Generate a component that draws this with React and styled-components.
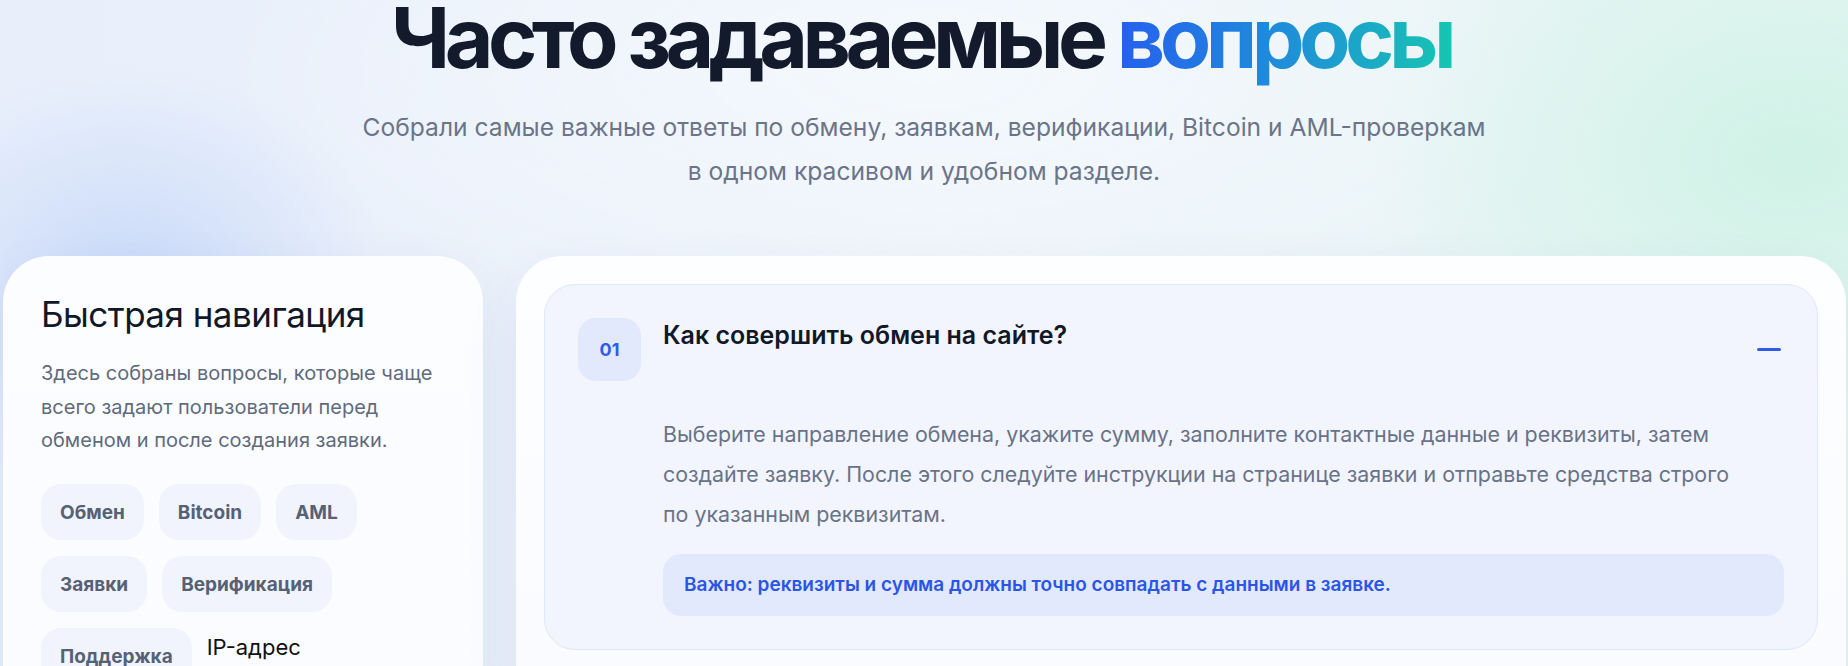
import React from 'react';
import styled, { createGlobalStyle } from 'styled-components';

const GlobalStyle = createGlobalStyle`
  * { box-sizing: border-box; }
  html, body {
    margin: 0;
    padding: 0;
    overflow: hidden;
  }
  body {
    font-family: Inter, "Noto Sans", sans-serif;
    background: #edf3fb;
  }
`;

const Page = styled.main`
  min-height: 100vh;
  background:
    radial-gradient(ellipse 260px 220px at 7% 40%, rgba(190, 210, 248, 0.75), transparent 100%),
    radial-gradient(ellipse 420px 300px at 97% 22%, rgba(206, 242, 230, 0.9), transparent 100%),
    radial-gradient(ellipse 700px 260px at 50% 10%, rgba(245, 249, 253, 0.9), transparent 100%),
    linear-gradient(90deg, #e8effb 0%, #eef4fb 50%, #e6f5f2 100%);
`;

const Hero = styled.header`
  text-align: center;
`;

const Title = styled.h1`
  margin: 0;
  font-size: 84px;
  line-height: 0.9;
  font-weight: 700;
  letter-spacing: -0.066em;
  color: #121a2c;
`;

const Accent = styled.span`
  background: linear-gradient(90deg, #2560ee 0%, #1f8fd8 50%, #16c7b1 100%);
  -webkit-background-clip: text;
  background-clip: text;
  color: transparent;
  padding-right: 6px;
`;

const Subtitle = styled.p`
  margin: 29px auto 0;
  font-size: 24.6px;
  line-height: 44px;
  color: #6b7488;
`;

const Layout = styled.section`
  display: grid;
  grid-template-columns: 480px 1fr;
  gap: 33px;
  width: 1843px;
  margin: 63px 0 0 3px;
  align-items: start;
`;

const SideCard = styled.aside`
  min-height: 460px;
  padding: 37px 38px;
  border-radius: 46px;
  background: linear-gradient(180deg, #fcfdff 0%, #fbfcff 100%);
  box-shadow: 0 24px 60px rgba(40, 70, 140, 0.08);
`;

const SideTitle = styled.h2`
  margin: 0;
  font-size: 35px;
  line-height: 1.22;
  font-weight: 400;
  letter-spacing: -0.015em;
  color: #111827;
`;

const SideText = styled.p`
  margin: 22px 0 0;
  font-size: 20px;
  line-height: 33.6px;
  color: #5f6a7d;
`;

const ChipList = styled.nav`
  display: flex;
  flex-wrap: wrap;
  align-items: flex-start;
  gap: 16px 15px;
  margin-top: 26px;
`;

const Chip = styled.button`
  height: 56px;
  padding: 0 19px;
  border: none;
  border-radius: 20px;
  background: #f1f4fd;
  color: #566176;
  font-family: Inter, "Noto Sans", sans-serif;
  font-size: 19px;
  font-weight: 700;
  cursor: pointer;
`;

const PlainLink = styled.span`
  padding-top: 6px;
  font-size: 22px;
  color: #111111;
`;

const MainCard = styled.div`
  min-height: 460px;
  padding: 28px;
  border-radius: 46px;
  background: linear-gradient(180deg, #fdfeff 0%, #f9fbff 100%);
  box-shadow: 0 24px 60px rgba(40, 70, 140, 0.07);
`;

const FaqItem = styled.article`
  padding: 33px;
  border: 1px solid #e1e7fa;
  border-radius: 31px;
  background: #f3f5fe;
`;

const FaqHead = styled.div`
  display: flex;
  align-items: center;
  gap: 22px;
`;

const Num = styled.span`
  flex-shrink: 0;
  display: flex;
  align-items: center;
  justify-content: center;
  width: 63px;
  height: 63px;
  border-radius: 18px;
  background: #e2e9fd;
  color: #2f5ce9;
  font-size: 18px;
  font-weight: 700;
`;

const Question = styled.h3`
  flex: 1;
  align-self: flex-start;
  margin: 0;
  padding-top: 1px;
  font-size: 25px;
  line-height: 32px;
  font-weight: 600;
  color: #111827;
`;

const Toggle = styled.button`
  display: flex;
  align-items: center;
  justify-content: center;
  width: 30px;
  height: 30px;
  padding: 0;
  border: none;
  background: none;
  cursor: pointer;

  span {
    width: 24px;
    height: 3px;
    border-radius: 2px;
    background: #2f5ce9;
  }
`;

const Answer = styled.div`
  margin-top: 33px;
  padding-left: 85px;
`;

const AnswerText = styled.p`
  max-width: 1082px;
  margin: 0;
  font-size: 21.4px;
  line-height: 40px;
  color: #687387;
`;

const Note = styled.div`
  margin-top: 20px;
  padding: 18px 21px;
  border-radius: 18px;
  background: #e2e9fc;
  color: #2a55e8;
  font-size: 19px;
  line-height: 26px;
  font-weight: 600;
`;

const chips = ['Обмен', 'Bitcoin', 'AML', 'Заявки', 'Верификация', 'Поддержка'];

export default function App() {
  return (
    <Page>
      <GlobalStyle />
      <Hero>
        <Title>
          Часто задаваемые <Accent>вопросы</Accent>
        </Title>
        <Subtitle>
          Собрали самые важные ответы по обмену, заявкам, верификации, Bitcoin и AML-проверкам
          <br />
          в одном красивом и удобном разделе.
        </Subtitle>
      </Hero>

      <Layout>
        <SideCard>
          <SideTitle>Быстрая навигация</SideTitle>
          <SideText>
            Здесь собраны вопросы, которые чаще всего задают пользователи перед обменом и после
            создания заявки.
          </SideText>
          <ChipList>
            {chips.map((c) => (
              <Chip key={c}>{c}</Chip>
            ))}
            <PlainLink>IP-адрес</PlainLink>
          </ChipList>
        </SideCard>

        <MainCard>
          <FaqItem>
            <FaqHead>
              <Num>01</Num>
              <Question>Как совершить обмен на сайте?</Question>
              <Toggle aria-label="Свернуть">
                <span />
              </Toggle>
            </FaqHead>
            <Answer>
              <AnswerText>
                Выберите направление обмена, укажите сумму, заполните контактные данные и реквизиты,
                затем создайте заявку. После этого следуйте инструкции на странице заявки и отправьте
                средства строго по указанным реквизитам.
              </AnswerText>
              <Note>Важно: реквизиты и сумма должны точно совпадать с данными в заявке.</Note>
            </Answer>
          </FaqItem>
        </MainCard>
      </Layout>
    </Page>
  );
}
